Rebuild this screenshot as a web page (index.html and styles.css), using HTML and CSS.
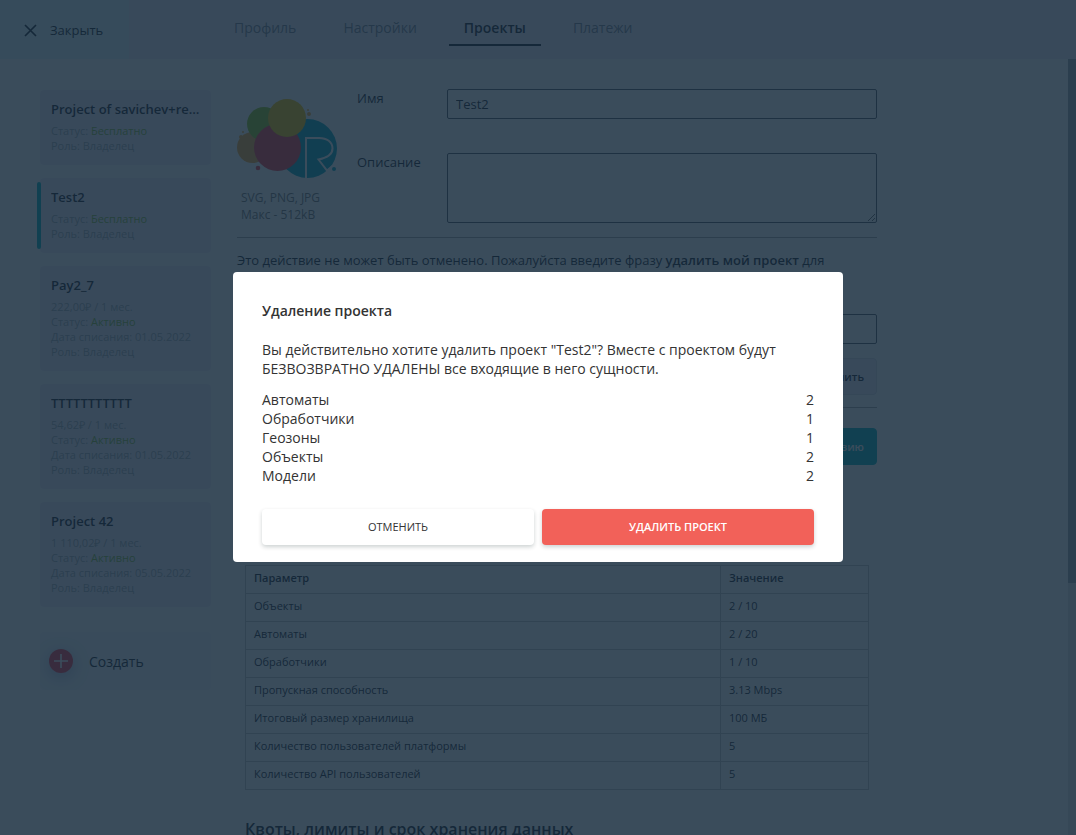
FILE: index.html
```html
<!DOCTYPE html>
<html lang="ru">
<head>
    <meta charset="UTF-8">
    <meta name="viewport" content="width=device-width, initial-scale=1.0">
    <title>Проекты</title>
    <link rel="stylesheet" href="styles.css">
</head>
<body>
    <div class="app">
        <header class="header">
            <button class="close-btn" type="button">
                <svg width="13" height="13" viewBox="0 0 13 13" fill="none" stroke="currentColor" stroke-width="1.7"><path d="M1 1l11 11M12 1L1 12"/></svg>
                <span>Закрыть</span>
            </button>
            <nav class="tabs">
                <a href="#profile" class="tab">Профиль</a>
                <a href="#settings" class="tab">Настройки</a>
                <a href="#projects" class="tab active">Проекты</a>
                <a href="#payments" class="tab">Платежи</a>
            </nav>
        </header>

        <div class="page">
            <aside class="sidebar">
                <div class="card">
                    <h3>Project of savichev+restest</h3>
                    <p>Статус: <span class="status">Бесплатно</span></p>
                    <p>Роль: Владелец</p>
                </div>
                <div class="card selected">
                    <h3>Test2</h3>
                    <p>Статус: <span class="status">Бесплатно</span></p>
                    <p>Роль: Владелец</p>
                </div>
                <div class="card">
                    <h3>Pay2_7</h3>
                    <p>222,00₽ / 1 мес.</p>
                    <p>Статус: <span class="status">Активно</span></p>
                    <p>Дата списания: 01.05.2022</p>
                    <p>Роль: Владелец</p>
                </div>
                <div class="card">
                    <h3>ТТТТТТТТТТТ</h3>
                    <p>54,62₽ / 1 мес.</p>
                    <p>Статус: <span class="status">Активно</span></p>
                    <p>Дата списания: 01.05.2022</p>
                    <p>Роль: Владелец</p>
                </div>
                <div class="card">
                    <h3>Project 42</h3>
                    <p>1 110,02₽ / 1 мес.</p>
                    <p>Статус: <span class="status">Активно</span></p>
                    <p>Дата списания: 05.05.2022</p>
                    <p>Роль: Владелец</p>
                </div>
                <button class="create-btn" type="button">
                    <span class="plus">
                        <svg width="14" height="14" viewBox="0 0 14 14" fill="none" stroke="currentColor" stroke-width="1.6"><path d="M7 0v14M0 7h14"/></svg>
                    </span>
                    <span>Создать</span>
                </button>
            </aside>

            <main class="content">
                <section class="project">
                    <div class="logo">
                        <svg width="100" height="82" viewBox="0 0 100 82">
                            <circle cx="15.5" cy="49.5" r="15.5" fill="#f7a83c"/>
                            <circle cx="27" cy="26" r="17" fill="#90c81e"/>
                            <circle cx="70.5" cy="50.5" r="29.5" fill="#06a6be"/>
                            <circle cx="40.5" cy="49.5" r="23.5" fill="#ee3a46"/>
                            <circle cx="50" cy="20" r="19" fill="#f4c400"/>
                            <path d="M69 82V40h13c8 0 13.5 4 13.5 10.500 0 5-4 9-14 11L90 72.500l6-5" fill="none" stroke="#fff" stroke-width="2"/>
                            <circle cx="4" cy="39" r="2" fill="#f7a83c"/>
                            <circle cx="6" cy="34" r="1" fill="#f7a83c"/>
                            <circle cx="72" cy="16" r="2" fill="#f7a83c"/>
                            <circle cx="71" cy="12" r="1" fill="#f7a83c"/>
                            <circle cx="21" cy="70" r="2.3" fill="#ee3a46"/>
                            <circle cx="97" cy="71" r="2" fill="#06a6be"/>
                        </svg>
                        <p>SVG, PNG, JPG<br>Макс - 512kB</p>
                    </div>
                    <form class="fields">
                        <label for="name">Имя</label>
                        <input id="name" type="text" value="Test2">
                        <label for="description">Описание</label>
                        <textarea id="description"></textarea>
                    </form>
                </section>

                <form class="remove">
                    <label for="phrase">Это действие не может быть отменено. Пожалуйста введите фразу <b>удалить мой проект</b> для подтверждения.</label>
                    <input id="phrase" type="text">
                    <button class="btn" type="button">Сохранить</button>
                </form>

                <div class="license">
                    <button class="btn primary" type="button">Изменить лицензию</button>
                </div>

                <section class="limits">
                    <table>
                        <thead>
                            <tr><th>Параметр</th><th class="value">Значение</th></tr>
                        </thead>
                        <tbody>
                            <tr><td>Объекты</td><td>2 / 10</td></tr>
                            <tr><td>Автоматы</td><td>2 / 20</td></tr>
                            <tr><td>Обработчики</td><td>1 / 10</td></tr>
                            <tr><td>Пропускная способность</td><td>3.13 Mbps</td></tr>
                            <tr><td>Итоговый размер хранилища</td><td>100 МБ</td></tr>
                            <tr><td>Количество пользователей платформы</td><td>5</td></tr>
                            <tr><td>Количество API пользователей</td><td>5</td></tr>
                        </tbody>
                    </table>
                    <h2>Квоты, лимиты и срок хранения данных</h2>
                </section>
            </main>

            <div class="scrollbar"><div class="thumb"></div></div>
        </div>
    </div>

    <div class="overlay">
        <div class="modal" role="dialog" aria-labelledby="modalTitle">
            <h2 id="modalTitle">Удаление проекта</h2>
            <p>Вы действительно хотите удалить проект "Test2"? Вместе с проектом будут БЕЗВОЗВРАТНО УДАЛЕНЫ все входящие в него сущности.</p>
            <ul>
                <li><span>Автоматы</span><span>2</span></li>
                <li><span>Обработчики</span><span>1</span></li>
                <li><span>Геозоны</span><span>1</span></li>
                <li><span>Объекты</span><span>2</span></li>
                <li><span>Модели</span><span>2</span></li>
            </ul>
            <div class="modal-buttons">
                <button class="cancel" type="button">Отменить</button>
                <button class="danger" type="button">Удалить проект</button>
            </div>
        </div>
    </div>
</body>
</html>
```

FILE: styles.css
```css
* {
    box-sizing: border-box;
}

body {
    margin: 0;
    font-family: 'Open Sans', sans-serif;
    font-size: 13px;
    line-height: 18px;
    color: #1c2430;
    background: #fff;
}

h2, h3, p, ul {
    margin: 0;
    padding: 0;
}

button, input, textarea {
    font-family: inherit;
    font-size: 13px;
    color: inherit;
}

button {
    border: none;
    cursor: pointer;
}

.app {
    display: flex;
    flex-direction: column;
    height: 100vh;
    overflow: hidden;
}

/* header */
.header {
    display: flex;
    flex: none;
    height: 59px;
    background: #f3edf9;
}

.close-btn {
    display: flex;
    align-items: center;
    gap: 13px;
    width: 129px;
    padding: 1px 0 0 24px;
    background: #e7f7fa;
}

.tabs {
    display: flex;
    align-items: flex-start;
    gap: 17px;
    padding: 14px 0 0 90px;
}

.tab {
    padding: 4px 15px 6px;
    font-size: 14px;
    line-height: 20px;
    color: #7c8494;
    text-decoration: none;
    border-bottom: 2px solid transparent;
}

.tab.active {
    color: #1c2430;
    font-weight: 600;
    border-color: #1c2430;
}

.page {
    display: flex;
    flex: 1;
    min-height: 0;
}

/* projects list */
.sidebar {
    display: flex;
    flex-direction: column;
    flex: none;
    gap: 13px;
    width: 211px;
    padding: 31px 0 0 40px;
}

.card {
    position: relative;
    padding: 10px 11px 12px;
    font-size: 11px;
    line-height: 15px;
    color: #a4acb4;
    background: #f3edf9;
    border-radius: 4px;
}

.card h3 {
    margin-bottom: 5px;
    font-size: 13px;
    line-height: 18px;
    font-weight: 600;
    color: #1c2430;
    white-space: nowrap;
    overflow: hidden;
    text-overflow: ellipsis;
}

.card.selected::before {
    content: '';
    position: absolute;
    left: -3px;
    top: 4px;
    bottom: 4px;
    width: 4px;
    border-radius: 2px;
    background: #06b4be;
}

.status {
    color: #84ba3c;
}

.create-btn {
    display: flex;
    align-items: center;
    gap: 16px;
    height: 58px;
    margin-top: 12px;
    padding: 0 9px;
    font-size: 14px;
    background: #f4f8fa;
    border-radius: 4px;
}

.plus {
    display: flex;
    align-items: center;
    justify-content: center;
    width: 24px;
    height: 24px;
    color: #fff;
    background: #f23c4c;
    border-radius: 50%;
    box-shadow: 0 4px 16px rgba(80, 80, 160, 0.4);
}

/* project form */
.content {
    flex: 1;
    max-width: 666px;
    padding: 30px 0 0 26px;
}

.project {
    display: flex;
    gap: 20px;
    padding-bottom: 14px;
    border-bottom: 1px solid #aaa;
}

.logo {
    width: 100px;
    padding-top: 9px;
    font-size: 12px;
    line-height: 17px;
    color: #777;
}

.logo svg {
    display: block;
}

.logo p {
    padding: 9px 4px 0;
}

.fields {
    display: grid;
    flex: 1;
    grid-template-columns: 90px 1fr;
    row-gap: 34px;
}

input, textarea {
    display: block;
    width: 100%;
    height: 30px;
    padding: 0 8px;
    background: #fff;
    border: 1px solid #505864;
    border-radius: 2px;
}

textarea {
    height: 70px;
    resize: vertical;
}

.remove {
    display: flex;
    flex-direction: column;
    padding: 13px 0 12px;
    border-bottom: 1px solid #aaa;
}

.remove label {
    margin-bottom: 27px;
}

.remove input {
    margin-bottom: 14px;
}

b {
    font-weight: 600;
}

.btn {
    align-self: flex-end;
    height: 37px;
    padding: 0 12px;
    font-size: 11px;
    font-weight: 600;
    background: #f3edf9;
    border: 1px solid #dcdce4;
    border-radius: 4px;
}

.btn.primary {
    color: #fff;
    background: #06b4be;
    border-color: #06b4be;
}

.license {
    display: flex;
    justify-content: flex-end;
    padding: 20px 0 100px;
}

.limits {
    padding: 0 8px;
}

table {
    width: 100%;
    border-collapse: collapse;
    font-size: 11px;
    line-height: 15px;
}

th, td {
    height: 28px;
    padding: 4px 8px 8px;
    text-align: left;
    border: 1px solid #c8c8c8;
}

th {
    font-weight: 600;
}

.value {
    width: 148px;
}

.limits h2 {
    margin-top: 28px;
    font-size: 16px;
    line-height: 22px;
    font-weight: 600;
}

.scrollbar {
    width: 8px;
    margin-left: auto;
    background: #e4e4e4;
}

.thumb {
    height: 67.5%;
    background: #a4a8ac;
}

/* delete dialog */
.overlay {
    position: fixed;
    inset: 0;
    display: flex;
    align-items: center;
    justify-content: center;
    padding-bottom: 1px;
    background: rgba(20, 42, 59, 0.84);
}

.modal {
    width: 610px;
    padding: 29px 29px 17px;
    font-size: 14px;
    line-height: 19px;
    color: #333;
    background: #fff;
    border-radius: 4px;
}

.modal h2 {
    margin-bottom: 20px;
    font-size: 14px;
    font-weight: 600;
}

.modal p {
    margin-bottom: 12px;
}

.modal ul {
    margin-bottom: 24px;
    list-style: none;
}

.modal li {
    display: flex;
    justify-content: space-between;
}

.modal-buttons {
    display: flex;
    gap: 8px;
}

.modal-buttons button {
    flex: 1;
    height: 36px;
    padding-bottom: 2px;
    font-size: 11px;
    font-weight: 600;
    text-transform: uppercase;
    border-radius: 4px;
    box-shadow: 0 2px 4px rgba(0, 30, 30, 0.2);
}

.modal-buttons .cancel {
    font-weight: 500;
    background: #fff;
}

.modal-buttons .danger {
    color: #fff;
    background: #f26159;
}
```
